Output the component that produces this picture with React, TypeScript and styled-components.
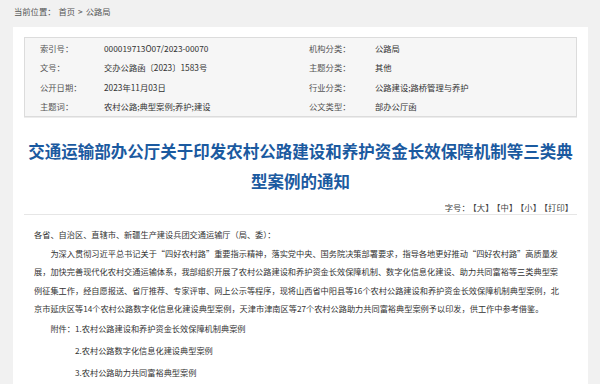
import styled, { createGlobalStyle } from "styled-components";

const GlobalStyle = createGlobalStyle`
  html, body {
    margin: 0;
    padding: 0;
    background: #f1f1f1;
    font-family: "Noto Sans CJK SC", "Noto Sans", sans-serif;
    color: #333;
  }
`;

const Page = styled.div`
  width: 600px;
  height: 384px;
  overflow: hidden;
`;
const Crumb = styled.div`
  height: 27px;
  padding: 5px 0 0 14px;
  box-sizing: border-box;
  font-size: 8.3px;
  line-height: 12px;
  color: #555;

  span {
    margin: 0 3px;
  }
`;
const Panel = styled.div`
  margin: 0 12px 0 13px;
  padding: 10px 11px 20px;
  background: #fff;
  min-height: 400px;
`;
const InfoBox = styled.div`
  display: grid;
  grid-template-columns: 269px 1fr;
  padding: 0 0 0 15px;
  border: 1px solid #dcdcdc;
  background: #f6f6f6;
  box-shadow: 0 1px 0 #ececec;
`;
const InfoItem = styled.div`
  display: flex;
  align-items: center;
  height: 19.5px;
  font-size: 8.3px;
`;
const InfoLabel = styled.span<{ $w: number }>`
  width: ${(p) => p.$w}px;
  flex-shrink: 0;
  color: #555;
`;
const InfoValue = styled.span`
  color: #333;
`;
const Title = styled.h1`
  margin: 19px 0 0;
  font-size: 16.5px;
  line-height: 30px;
  font-weight: bold;
  color: #1b5aa0;
  text-align: center;
`;
const Tools = styled.div`
  padding: 4px 4px 0 0;
  font-size: 8.3px;
  line-height: 14px;
  text-align: right;
  color: #444;
  border-bottom: 1px solid #e6e6e6;

  span {
    margin-left: 3px;
  }
`;
const Body = styled.div`
  margin-top: 10px;
  padding: 0 12px 0 10px;
  font-size: 8.2px;
  line-height: 18.5px;
  color: #333;

  p {
    margin: 0;
  }
`;
const Indent = styled.p`
  text-indent: 2em;
`;
const Attach = styled.div`
  display: flex;
  margin-top: -1px;
  padding-left: 2em;
  line-height: 22px;
`;
const AttachList = styled.div`
  display: flex;
  flex-direction: column;
`;

const leftRows = [
  ["索引号：", "000019713O07/2023-00070"],
  ["文号：", "交办公路函〔2023〕1583号"],
  ["公开日期：", "2023年11月03日"],
  ["主题词：", "农村公路;典型案例;养护;建设"],
];
const rightRows = [
  ["机构分类：", "公路局"],
  ["主题分类：", "其他"],
  ["行业分类：", "公路建设;路桥管理与养护"],
  ["公文类型：", "部办公厅函"],
];

const attachments = [
  "1.农村公路建设和养护资金长效保障机制典案例",
  "2.农村公路数字化信息化建设典型案例",
  "3.农村公路助力共同富裕典型案例",
];

function App() {
  return (
    <Page>
      <GlobalStyle />
      <Crumb>
        当前位置：<span>首页</span>&gt;<span>公路局</span>
      </Crumb>
      <Panel>
        <InfoBox>
          {leftRows.map((row, i) => [
            <InfoItem key={"l" + i}>
              <InfoLabel $w={64}>{row[0]}</InfoLabel>
              <InfoValue>{row[1]}</InfoValue>
            </InfoItem>,
            <InfoItem key={"r" + i}>
              <InfoLabel $w={66}>{rightRows[i][0]}</InfoLabel>
              <InfoValue>{rightRows[i][1]}</InfoValue>
            </InfoItem>,
          ])}
        </InfoBox>
        <Title>
          交通运输部办公厅关于印发农村公路建设和养护资金长效保障机制等三类典型案例的通知
        </Title>
        <Tools>
          字号：<span>【大】</span>
          <span>【中】</span>
          <span>【小】</span>
          <span>【打印】</span>
        </Tools>
        <Body>
          <p>各省、自治区、直辖市、新疆生产建设兵团交通运输厅（局、委）：</p>
          <Indent>
            为深入贯彻习近平总书记关于“四好农村路”重要指示精神，落实党中央、国务院决策部署要求，指导各地更好推动“四好农村路”高质量发展，加快完善现代化农村交通运输体系，我部组织开展了农村公路建设和养护资金长效保障机制、数字化信息化建设、助力共同富裕等三类典型案例征集工作，经自愿报送、省厅推荐、专家评审、网上公示等程序，现将山西省中阳县等16个农村公路建设和养护资金长效保障机制典型案例，北京市延庆区等14个农村公路数字化信息化建设典型案例，天津市津南区等27个农村公路助力共同富裕典型案例予以印发，供工作中参考借鉴。
          </Indent>
          <Attach>
            <span>附件：</span>
            <AttachList>
              {attachments.map((a) => (
                <span key={a}>{a}</span>
              ))}
            </AttachList>
          </Attach>
        </Body>
      </Panel>
    </Page>
  );
}

export default App;
